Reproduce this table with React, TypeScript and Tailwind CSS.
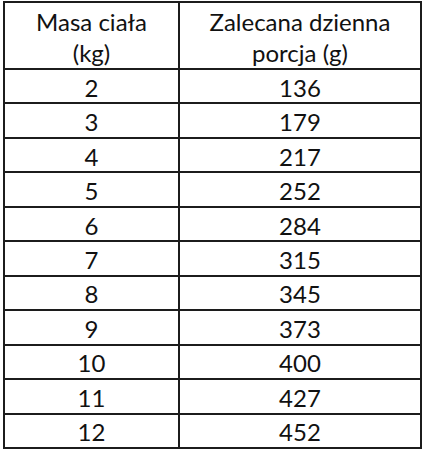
const rows: [string, string][] = [
  ['2', '136'],
  ['3', '179'],
  ['4', '217'],
  ['5', '252'],
  ['6', '284'],
  ['7', '315'],
  ['8', '345'],
  ['9', '373'],
  ['10', '400'],
  ['11', '427'],
  ['12', '452'],
];

export default function App() {
  return (
    <div className="h-[450px] w-[433px] bg-white pt-[1px] pl-[3px] font-['Lato',sans-serif] text-[24px] text-[#111]">
      <div className="flex h-[448px] w-[419px] flex-col border-2 border-[#1c1c1c]">
        {/* header */}
        <div className="grid h-[65px] shrink-0 grid-cols-[175px_1fr] leading-[31px]">
          <div className="flex items-center justify-center border-r-2 border-[#1c1c1c] pt-[2px] text-center">
            Masa ciała
            <br />
            (kg)
          </div>
          <div className="flex items-center justify-center pt-[2px] text-center">
            Zalecana dzienna
            <br />
            porcja (g)
          </div>
        </div>

        {rows.map(([kg, g]) => (
          <div
            key={kg}
            className="grid flex-1 grid-cols-[175px_1fr] border-t-2 border-[#1c1c1c] leading-none"
          >
            <div className="flex items-center justify-center border-r-2 border-[#1c1c1c] pt-[3px]">
              {kg}
            </div>
            <div className="flex items-center justify-center pt-[3px]">{g}</div>
          </div>
        ))}
      </div>
    </div>
  );
}
